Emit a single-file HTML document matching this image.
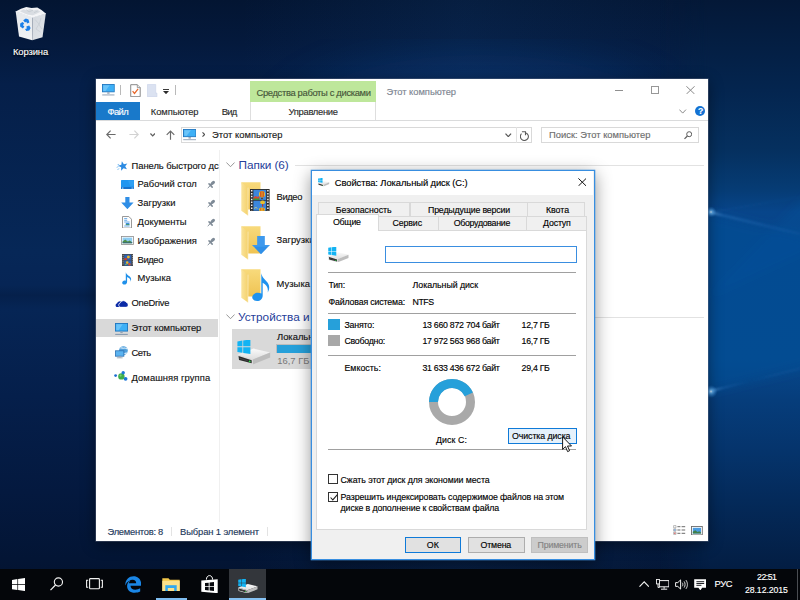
<!DOCTYPE html>
<html lang="ru">
<head>
<meta charset="utf-8">
<title>Свойства: Локальный диск (C:)</title>
<style>
html,body{margin:0;padding:0;}
body{width:800px;height:600px;overflow:hidden;position:relative;background:#081c3c;font-family:"Liberation Sans",sans-serif;font-size:9.4px;color:#000;}
.abs,.t,div,svg{position:absolute;}
.t{-webkit-text-stroke:.14px currentColor;white-space:pre;line-height:14px;height:14px;font-family:"Liberation Sans",sans-serif;}
#wall{left:0;top:0;width:800px;height:600px;}
#taskbar{left:0;top:568.500px;width:800px;height:31.500px;background:#04060a;}
#explorer{left:96px;top:79px;width:612px;height:461.700px;background:#fff;box-shadow:0 0 0 0.6px rgba(120,130,150,.55),0 3px 14px rgba(0,0,0,.45);}
#dialog{left:311.200px;top:170.300px;width:283.500px;height:389.400px;background:#f0f0f0;box-shadow:0 0 0 .3px #4a98e2,0 4px 16px rgba(0,0,0,.42);outline:1.200px solid #388ee0;outline-offset:-1.200px;}
.tb{background:#f0f0f0;border:1px solid #d9d9d9;box-sizing:border-box;}
.sp{left:328px;width:248.400px;height:1px;background:#a0a0a0;}
</style>
</head>
<body>
<!-- ===== WALLPAPER ===== -->
<svg id="wall" width="800" height="600" viewBox="0 0 800 600">
<defs>
<linearGradient id="wv" x1="0" y1="0" x2="0" y2="1">
<stop offset="0" stop-color="#031532"/><stop offset=".07" stop-color="#04193c"/><stop offset=".14" stop-color="#051f49"/><stop offset=".42" stop-color="#062757"/><stop offset=".475" stop-color="#062555"/><stop offset=".492" stop-color="#05204b"/><stop offset=".515" stop-color="#062555"/><stop offset=".66" stop-color="#051f4b"/><stop offset=".82" stop-color="#04193f"/><stop offset=".93" stop-color="#031535"/><stop offset="1" stop-color="#03122c"/>
</linearGradient>
<linearGradient id="wr" x1="0" y1="0" x2="0" y2="1">
<stop offset="0" stop-color="#041837"/><stop offset=".15" stop-color="#04254f"/><stop offset=".25" stop-color="#05305f"/><stop offset=".317" stop-color="#063c75"/><stop offset=".353" stop-color="#07458a"/><stop offset=".42" stop-color="#07478c"/><stop offset=".6" stop-color="#07488c"/><stop offset=".667" stop-color="#063d7b"/><stop offset=".75" stop-color="#05346c"/><stop offset=".833" stop-color="#042a5a"/><stop offset=".942" stop-color="#031e44"/><stop offset="1" stop-color="#031838"/>
</linearGradient>
<linearGradient id="wh" x1="0" y1="0" x2="1" y2="0">
<stop offset="0" stop-color="#fff" stop-opacity="0"/><stop offset=".3" stop-color="#2a7fd8" stop-opacity="0"/><stop offset=".58" stop-color="#2a7fd8" stop-opacity=".09"/><stop offset=".85" stop-color="#2a7fd8" stop-opacity=".03"/><stop offset="1" stop-color="#000" stop-opacity=".12"/>
</linearGradient>
<linearGradient id="mh" x1="0" y1="0" x2="1" y2="0"><stop offset="0" stop-color="#000"/><stop offset=".36" stop-color="#fff"/><stop offset="1" stop-color="#fff"/></linearGradient>
<linearGradient id="ray" x1="0" y1="0" x2="1" y2="0"><stop offset="0" stop-color="#8fccff" stop-opacity=".6"/><stop offset=".15" stop-color="#4fa0ee" stop-opacity=".22"/><stop offset="1" stop-color="#3f8fe0" stop-opacity=".07"/></linearGradient>
<radialGradient id="glow"><stop offset="0" stop-color="#dff2ff" stop-opacity="1"/><stop offset=".25" stop-color="#6fc0ff" stop-opacity=".75"/><stop offset="1" stop-color="#2a86e0" stop-opacity="0"/></radialGradient>
<filter id="b4"><feGaussianBlur stdDeviation="5"/></filter>
<filter id="b1"><feGaussianBlur stdDeviation=".9"/></filter>
<filter id="b20"><feGaussianBlur stdDeviation="22"/></filter>
</defs>
<rect width="800" height="600" fill="url(#wv)"/>
<rect width="800" height="600" fill="url(#wh)"/>
<ellipse cx="480" cy="135" rx="200" ry="80" fill="#0d4a96" opacity=".26" filter="url(#b20)"/>
<mask id="mr"><rect x="660" y="0" width="140" height="600" fill="url(#mh)"/></mask><rect x="660" y="0" width="140" height="600" fill="url(#wr)" mask="url(#mr)"/>
<g filter="url(#b4)"><path d="M704 212L812 238V366L704 393z" fill="#0a4f98" opacity=".5"/><path d="M704 300L812 250V190z" fill="#0a58a8" opacity=".18"/></g>
<path d="M710 300.500H800" stroke="#04356e" stroke-width="1.800" opacity=".9" filter="url(#b1)"/>
<g filter="url(#b1)"><path d="M710 211L800 232.500v3L710 213.500z" fill="url(#ray)"/><path d="M710 392.500L800 367v3L710 390z" fill="url(#ray)"/><path d="M710 212L800 196v2L710 213z" fill="url(#ray)" opacity=".35"/></g>
<path d="M710.200 212V392" stroke="#9fd4ff" stroke-width="1.400" opacity=".8" filter="url(#b1)"/>
<circle cx="711" cy="212" r="5.500" fill="url(#glow)"/><circle cx="711" cy="391.500" r="6.500" fill="url(#glow)"/>
</svg>

<svg width="0" height="0" style="left:0;top:0"><defs>
<linearGradient id="fb" x1="0" y1="0" x2="0" y2="1"><stop offset="0" stop-color="#f8da7c"/><stop offset="1" stop-color="#efc352"/></linearGradient>
<linearGradient id="ff" x1="0" y1="0" x2="1" y2="0"><stop offset="0" stop-color="#fae39a"/><stop offset="1" stop-color="#f4d16c"/></linearGradient>
<symbol id="folder" viewBox="0 0 20 34"><path d="M.3.200h19.200v27.400H6.800z" fill="url(#fb)"/><path d="M.3.200l6.700 5.300v28L.3 28.800z" fill="url(#ff)"/><path d="M7 5.500v28" stroke="#fbeec4" stroke-width=".7"/></symbol>
<linearGradient id="dg" x1="0" y1="0" x2="0" y2="1"><stop offset="0" stop-color="#fafafa"/><stop offset="1" stop-color="#dedede"/></linearGradient>
<symbol id="drive" viewBox="0 0 34 25"><path d="M.4 14.600L16.700 8.600l16.500 4L15.800 19.400z" fill="url(#dg)"/><path d="M15.800 19.400L33.200 12.600v5L15.800 24.500z" fill="#bdbdbd"/><path d="M.4 14.600l15.400 4.800v5.100L1 20.700z" fill="#dcdcdc"/><path d="M1.500 16.100l13.200 4.100v3L2 19.900z" fill="#2b2b2b"/><path d="M2.400 17.800l8.600 2.600v.9l-8.500-2.500z" fill="#4a4a4a"/><circle cx="12.700" cy="21.400" r=".95" fill="#2fe04a"/><path d="M.4 1.400l5-.8v5.700h-5zM6.200.5L13.400-.6v6.900H6.200zM.4 7.300h5v5.500l-5-.8zM6.200 7.300h7.200v6.800l-7.200-1.200z" fill="#12b3f3"/></symbol>
<symbol id="pc" viewBox="0 0 13 12"><rect x=".45" y=".45" width="12.100" height="7.500" fill="#3eb0f6" stroke="#1f76bf" stroke-width=".9"/><path d="M1.300 1.300h6.400L3.600 7.100H1.300z" fill="#8fd6fb" opacity=".55"/><rect x="5.300" y="8.400" width="2.400" height="1.500" fill="#94a3b4"/><rect x=".2" y="10.700" width="12.600" height="1" fill="#8094ab"/></symbol>
</defs></svg>
<!-- ===== EXPLORER WINDOW ===== -->
<div id="explorer">
</div>
<div id="ex" style="left:0;top:0;width:0;height:0;">
<!-- quick access toolbar -->
<svg style="left:102.2px;top:84.2px" width="12.8" height="11.8" viewBox="0 0 13 12" preserveAspectRatio="none"><use href="#pc"/></svg>
<div style="left:120px;top:85px;width:1px;height:9.6px;background:#b9b9b9"></div>
<svg style="left:129.6px;top:83.8px" width="11" height="13.4" viewBox="0 0 11 13.4"><path d="M.7.7h6.6l2.9 2.9v9.1H.7z" fill="#fff" stroke="#7c7c7c" stroke-width=".9"/><path d="M7.3.7v2.9h2.9" fill="#e8e8e8" stroke="#7c7c7c" stroke-width=".7"/><path d="M2.6 7.2l1.9 2.2 3.6-4.6" fill="none" stroke="#e8672a" stroke-width="1.25"/></svg>
<svg style="left:146.8px;top:83.8px" width="11" height="13.4" viewBox="0 0 11 13.4"><path d="M.5.500h8.200v8.600h1.200v3.800H.5z" fill="#dbe2f1" stroke="#cdd6ea" stroke-width=".7"/></svg>
<div style="left:163px;top:88.6px;width:6px;height:1.1px;background:#3b3b3b"></div>
<svg style="left:163px;top:90.8px" width="6" height="3.2" viewBox="0 0 6 3.2"><path d="M0 0h6L3 3.2z" fill="#2b2b2b"/></svg>
<div style="left:175.4px;top:85px;width:1px;height:9.6px;background:#b9b9b9"></div>
<!-- contextual tab -->
<div style="left:250.400px;top:81.200px;width:125.200px;height:21px;background:#bee79b"></div>
<span class="t" style="left:256.5px;top:85.5px;font-size:9.4px;letter-spacing:-0.335px;color:#46563a;">Средства работы с дисками</span>
<span class="t" style="left:386.5px;top:84.8px;font-size:9.4px;letter-spacing:-0.044px;color:#7d8591;">Этот компьютер</span>
<div style="left:250.400px;top:102.200px;width:1px;height:17.600px;background:#dedede"></div>
<div style="left:374.800px;top:102.200px;width:1px;height:17.600px;background:#dedede"></div>
<!-- caption buttons -->
<div style="left:615.2px;top:90px;width:8.2px;height:1px;background:#8f8f8f"></div>
<div style="left:650.8px;top:86.2px;width:7.8px;height:7.4px;border:1px solid #989898;box-sizing:border-box"></div>
<svg style="left:686.4px;top:86px" width="9" height="8.4" viewBox="0 0 9 8.4"><path d="M.3.2l8.4 8M8.7.2L.3 8.2" stroke="#8a8a8a" stroke-width="1" fill="none"/></svg>
<!-- ribbon tabs -->
<div style="left:96px;top:102.2px;width:44px;height:18px;background:#1979ca"></div>
<span class="t" style="left:107.6px;top:105px;font-size:9.4px;letter-spacing:-0.666px;color:#fff;">Файл</span>
<span class="t" style="left:150.8px;top:105px;font-size:9.4px;letter-spacing:-0.092px;color:#2b2b2b;">Компьютер</span>
<span class="t" style="left:221.8px;top:105px;font-size:9.4px;letter-spacing:-0.756px;color:#2b2b2b;">Вид</span>
<span class="t" style="left:288.6px;top:105px;font-size:9.4px;letter-spacing:-0.312px;color:#2b2b2b;">Управление</span>
<svg style="left:679.4px;top:108.6px" width="7.4" height="5" viewBox="0 0 7.4 5"><path d="M.4.6l3.3 3.5L7 .6" fill="none" stroke="#8a8a8a" stroke-width="1"/></svg>
<div style="left:694.600px;top:105.600px;width:10.800px;height:10.800px;border-radius:50%;background:#1372d3"></div>
<span class="t" style="left:698px;top:104.2px;font-size:8.6px;color:#fff;font-weight:bold;">?</span>
<div style="left:96px;top:119.500px;width:612px;height:1px;background:#dadbdc"></div>
<!-- nav row -->
<svg style="left:106.2px;top:130px" width="10" height="9" viewBox="0 0 10 9"><path d="M9.6 4.5H1M4.6.7L.8 4.5l3.8 3.8" fill="none" stroke="#6a6a6a" stroke-width="1.15"/></svg>
<svg style="left:129.4px;top:130px" width="10" height="9" viewBox="0 0 10 9"><path d="M.4 4.5H9M5.4.7l3.8 3.8-3.8 3.8" fill="none" stroke="#d2d2d2" stroke-width="1.15"/></svg>
<svg style="left:150px;top:133px" width="5.4" height="3.6" viewBox="0 0 5.4 3.6"><path d="M.4.500l2.300 2.400L5 .5" fill="none" stroke="#5f5f5f" stroke-width="1.250"/></svg>
<svg style="left:166.4px;top:129.6px" width="9" height="10" viewBox="0 0 9 10"><path d="M4.5 9.8V1M.7 4.8L4.5 1l3.8 3.8" fill="none" stroke="#6a6a6a" stroke-width="1.15"/></svg>
<div style="left:180.6px;top:126.8px;width:351.2px;height:16.6px;border:1px solid #d9d9d9;box-sizing:border-box"></div>
<div style="left:516.4px;top:127.4px;width:1px;height:15.4px;background:#e2e2e2"></div>
<svg style="left:183px;top:129.2px" width="13.4" height="11.6" viewBox="0 0 13 12" preserveAspectRatio="none"><use href="#pc"/></svg>
<svg style="left:201.6px;top:132.4px" width="3.4" height="5" viewBox="0 0 3.4 5"><path d="M.5.400l2.200 2.100L.5 4.600" fill="none" stroke="#4f4f4f" stroke-width="1.150"/></svg>
<span class="t" style="left:212px;top:127.8px;font-size:9.4px;letter-spacing:0.028px;color:#1a1a1a;">Этот компьютер</span>
<svg style="left:505.4px;top:132.6px" width="6.6" height="4.6" viewBox="0 0 6.6 4.6"><path d="M.5.6l2.8 3 2.8-3" fill="none" stroke="#555" stroke-width="1.2"/></svg>
<svg style="left:519.800px;top:130.800px" width="9.400" height="10.200" viewBox="0 0 9.400 10.200"><path d="M6.200 1.900A4 4 0 1 1 1.500 2.700" fill="none" stroke="#5a5a5a" stroke-width="1.100"/><path d="M1.900.75h3.600v3.400" fill="none" stroke="#5a5a5a" stroke-width="1.100"/></svg>
<div style="left:541.4px;top:126.8px;width:157.8px;height:16.6px;border:1px solid #d9d9d9;box-sizing:border-box"></div>
<span class="t" style="left:549px;top:128px;font-size:9.4px;letter-spacing:0.010px;color:#6d6d6d;">Поиск: Этот компьютер</span>
<svg style="left:683.8px;top:131.2px" width="8.4" height="8.4" viewBox="0 0 8.4 8.4"><circle cx="5.2" cy="3.2" r="2.5" fill="none" stroke="#5d5d5d" stroke-width="1"/><path d="M3.4 5L.5 7.9" stroke="#5d5d5d" stroke-width="1.2"/></svg>
<!-- sidebar -->
<div style="left:219px;top:150px;width:1px;height:372px;background:#f0f0f0"></div>
<svg style="left:116.4px;top:160.6px" width="12" height="10" viewBox="0 0 12 10"><g transform="rotate(-14 7 5)"><path d="M7 .200l1.300 3.200 3.500.2-2.700 2.200.9 3.400L7 7.300 4 9.200l.9-3.400L2.200 3.600l3.500-.2z" fill="#2c8be2"/></g><path d="M.6 6.400l2-.9M1.400 8.600l1.900-1M1.600 3.600l1.500-.2" stroke="#74baf3" stroke-width=".8"/></svg>
<span class="t" style="left:131.5px;top:158.6px;font-size:9.4px;letter-spacing:-0.030px;color:#111;">Панель быстрого д</span>
<div style="left:214px;top:159px;width:4.6px;height:13px;overflow:hidden"><span class="t" style="left:0;top:-.4px;font-size:9.4px;color:#111">с</span></div>
<svg style="left:121px;top:179.8px" width="13.2" height="9.4" viewBox="0 0 13.2 9.4"><rect width="13.200" height="9.200" rx=".6" fill="#2196f0"/><path d="M7 .5h5.700v5L9.500 6.400z" fill="#3aa6f5" opacity=".6"/><rect y="7" width="13.200" height="2.200" fill="#1672cc"/><rect x=".9" y="7.600" width="1.500" height="1" fill="#cfe9ff"/><rect x="10.500" y="7.600" width="1.900" height="1" fill="#9fd2fb"/></svg>
<span class="t" style="left:137.6px;top:177.4px;font-size:9.4px;letter-spacing:0.028px;color:#111;">Рабочий стол</span>
<svg style="left:207.400px;top:180px" width="9" height="9" viewBox="0 0 9 9"><g stroke="#7f8b97" fill="none" stroke-linecap="round"><path d="M6.500 2.300L5.600 3.100" stroke-width="3"/><path d="M5.900 2.900L3.700 4.900" stroke-width="2.100"/><path d="M2 3.900l3.200 3.200" stroke-width="1.500"/><path d="M3.100 5.700L1 7.800" stroke-width="1"/></g></svg>
<svg style="left:121.2px;top:196.8px" width="12.8" height="12.4" viewBox="0 0 12.8 12.4"><path d="M4.3 0h4.2v5.6h4.1L6.4 12.2.2 5.6h4.1z" fill="#2f8ee6"/></svg>
<span class="t" style="left:137.6px;top:196.2px;font-size:9.4px;letter-spacing:0.021px;color:#111;">Загрузки</span>
<svg style="left:207.400px;top:198.8px" width="9" height="9" viewBox="0 0 9 9"><g stroke="#7f8b97" fill="none" stroke-linecap="round"><path d="M6.500 2.300L5.600 3.100" stroke-width="3"/><path d="M5.900 2.900L3.700 4.900" stroke-width="2.100"/><path d="M2 3.900l3.200 3.200" stroke-width="1.500"/><path d="M3.100 5.700L1 7.800" stroke-width="1"/></g></svg>
<svg style="left:122.2px;top:215.6px" width="10" height="12.6" viewBox="0 0 10 12.6"><path d="M.5.5h6.3l2.7 2.7v8.9H.5z" fill="#fdfdfd" stroke="#8c8c8c" stroke-width=".9"/><path d="M2.200 2.600h3M2.200 4.300h3M2.200 6h5.400M2.200 10h5.400" stroke="#5aa3e6" stroke-width=".9"/><rect x="3.800" y="6.900" width="3.600" height="2.200" fill="#3e8fe0"/><rect x="3.800" y="8.300" width="3.600" height=".8" fill="#4a9a4a"/></svg>
<span class="t" style="left:137.6px;top:215.2px;font-size:9.4px;letter-spacing:0.086px;color:#111;">Документы</span>
<svg style="left:207.400px;top:217.8px" width="9" height="9" viewBox="0 0 9 9"><g stroke="#7f8b97" fill="none" stroke-linecap="round"><path d="M6.500 2.300L5.600 3.100" stroke-width="3"/><path d="M5.900 2.900L3.700 4.900" stroke-width="2.100"/><path d="M2 3.900l3.200 3.200" stroke-width="1.500"/><path d="M3.100 5.700L1 7.800" stroke-width="1"/></g></svg>
<svg style="left:121.2px;top:236.4px" width="12.8" height="8.8" viewBox="0 0 12.8 8.8"><rect x=".4" y=".4" width="12" height="8" fill="#fff" stroke="#8d8d8d" stroke-width=".8"/><rect x="1.6" y="1.6" width="9.6" height="5.6" fill="#8ecdf3"/><path d="M1.6 7.2V5.4l2.6-1.8 2.6 2 1.8-1 2.6 1.6v1z" fill="#4f8f4a"/><path d="M1.6 7.2V6.4l9.6 0v.8z" fill="#2f5f8a"/></svg>
<span class="t" style="left:137.6px;top:233.8px;font-size:9.4px;letter-spacing:0.025px;color:#111;">Изображения</span>
<svg style="left:207.400px;top:236.6px" width="9" height="9" viewBox="0 0 9 9"><g stroke="#7f8b97" fill="none" stroke-linecap="round"><path d="M6.500 2.300L5.600 3.100" stroke-width="3"/><path d="M5.900 2.900L3.700 4.900" stroke-width="2.100"/><path d="M2 3.900l3.200 3.200" stroke-width="1.500"/><path d="M3.100 5.700L1 7.800" stroke-width="1"/></g></svg>
<svg style="left:121.800px;top:253.800px" width="11.600" height="12.200" viewBox="0 0 11.600 12.200"><rect width="11.600" height="12.200" fill="#4a4a4a"/><rect x="2.300" y=".7" width="7" height="5.200" fill="#2c63b8"/><rect x="2.300" y="6.500" width="7" height="5.100" fill="#2c63b8"/><circle cx="6.400" cy="3" r="1.500" fill="#e8b62c"/><path d="M2.300 5.900V4.600l1.600-.9 1.300.9v1.300z" fill="#c8402a"/><circle cx="5.200" cy="8.600" r="1.300" fill="#e8b62c"/><circle cx="7.400" cy="10.200" r="1.200" fill="#d8502a"/><path d="M3 10.800l1.200-.6 1 .6" stroke="#7fd04a" stroke-width=".7" fill="none"/><path d="M1.100 1v10.400M10.500 1v10.400" stroke="#9a9a9a" stroke-width="1" stroke-dasharray="1 1.100"/></svg>
<span class="t" style="left:137.6px;top:252.8px;font-size:9.4px;letter-spacing:-0.398px;color:#111;">Видео</span>
<svg style="left:122.2px;top:272.4px" width="9.6" height="12.8" viewBox="0 0 9.6 12.8"><path d="M3.8.2c.6 2.2 2.4 3 4 4.4 1.600 1.5 1.800 3.400.6 5.200.5-2-.4-3.500-3.300-4.700v4.600c0 1.700-1.200 2.900-2.700 2.900C1 12.600.2 11.800.2 10.800c0-1.300 1.100-2.300 2.400-2.300.4 0 .8.100 1.200.3z" fill="#1f90ea"/></svg>
<span class="t" style="left:137.6px;top:271.2px;font-size:9.4px;letter-spacing:0.038px;color:#111;">Музыка</span>
<svg style="left:114.600px;top:298.800px" width="13.400" height="8.600" viewBox="0 0 13.400 8.600"><path d="M2.500 8.300A2.100 2.100 0 0 1 2.100 4.200 2.700 2.700 0 0 1 6.600 3.200V8.300z" fill="#0b2aa6"/><path d="M5.700 8.300A2.250 2.250 0 0 1 5.300 3.900 3.400 3.400 0 0 1 11.500 3.500 2.450 2.450 0 0 1 11 8.300z" fill="#0b2aa6" stroke="#fff" stroke-width=".75"/></svg>
<span class="t" style="left:131.5px;top:296.2px;font-size:9.4px;letter-spacing:-0.226px;color:#111;">OneDrive</span>
<div style="left:96px;top:318.800px;width:121.800px;height:18.4px;background:#d9d9d9"></div>
<svg style="left:114.7px;top:322.6px" width="13" height="12.2" viewBox="0 0 13 12" preserveAspectRatio="none"><use href="#pc"/></svg>
<span class="t" style="left:131.5px;top:321.4px;font-size:9.4px;letter-spacing:-0.022px;color:#111;">Этот компьютер</span>
<svg style="left:114.6px;top:346.4px" width="13.2" height="12.8" viewBox="0 0 13.2 12.8"><circle cx="8.400" cy="4.600" r="4.400" fill="#4f9fdc"/><path d="M5.400 2.200c1.600-.9 2.600.5 3.800-.1 1-.5 1.900.3 3 .8M8 7.400c1.400.4 2.800-.6 4.200-.2" stroke="#d4e9f8" stroke-width="1.200" fill="none"/><rect x=".5" y="4.800" width="8.400" height="5.400" fill="#5bb3f0" stroke="#2a6fb0" stroke-width=".8"/><rect x="3.400" y="10.400" width="2.600" height="1" fill="#98a4b0"/><rect x="1.800" y="11.400" width="5.800" height=".9" fill="#98a4b0"/></svg>
<span class="t" style="left:131.5px;top:346.2px;font-size:9.4px;letter-spacing:-0.415px;color:#111;">Сеть</span>
<svg style="left:114.4px;top:371.4px" width="13.600" height="10.200" viewBox="0 0 13.600 10.200"><circle cx="1.600" cy="4.600" r="1.400" fill="#1e6fd0"/><circle cx="7.400" cy="5.400" r="3.200" fill="#3fae49"/><circle cx="9.200" cy="1.800" r="1.700" fill="#1e78d8"/><circle cx="11.600" cy="7.800" r="1.900" fill="#1e78d8"/><circle cx="6.600" cy="4.600" r="1.100" fill="#8fe08a" opacity=".7"/></svg>
<span class="t" style="left:131.5px;top:371.2px;font-size:9.4px;letter-spacing:0.088px;color:#111;">Домашняя группа</span>

<!-- content -->
<svg style="left:225.6px;top:162px" width="9" height="5.400" viewBox="0 0 9 5.400"><path d="M.4.500l4.100 4.200L8.600.5" fill="none" stroke="#8c8c8c" stroke-width=".9"/></svg>
<span class="t" style="left:238.5px;top:158px;font-size:11.8px;letter-spacing:-0.075px;color:#26409a;-webkit-text-stroke:0;">Папки (6)</span>
<div style="left:294.6px;top:164.800px;width:409px;height:1px;background:#e2e2e2"></div>
<svg style="left:241.200px;top:181.800px" width="20" height="34"><use href="#folder"/></svg>
<svg style="left:250.400px;top:188.600px" width="19.600" height="22.600" viewBox="0 0 19.600 22.600"><rect width="19.600" height="22.600" fill="#2d2d2d"/><rect x="3.400" y=".9" width="12.800" height="10" fill="#3b86dc"/><rect x="3.400" y="11.700" width="12.800" height="10" fill="#3b86dc"/><path d="M3.400 8.500l2.200-1.600 2 1.200 1.800-1.400v4.200H3.400z" fill="#d8492f"/><path d="M3.400 9.600h6v1.300h-6z" fill="#2f9a3a"/><ellipse cx="12" cy="5.200" rx="3" ry="3.300" fill="#e9c02c"/><path d="M10.600 2.500v5.400M12 1.900v6.600M13.400 2.500v5.400" stroke="#c8321e" stroke-width=".8"/><rect x="11.200" y="8.800" width="1.600" height="1.300" fill="#5a3a1a"/><ellipse cx="12.600" cy="13.400" rx="2.400" ry="1.800" fill="#e9c02c"/><path d="M12.600 15.200v2.400" stroke="#c8321e" stroke-width="1.200"/><ellipse cx="12" cy="20.600" rx="3" ry="2" fill="#e9c02c"/><path d="M10.800 19.200v2.500M13.200 19.200v2.500" stroke="#c8321e" stroke-width=".8"/><path d="M4 19.400l2-.9 1.400.9" stroke="#e8e070" stroke-width=".7" fill="none"/><path d="M1.700 1v20.600M17.900 1v20.600" stroke="#f2f2f2" stroke-width="1.500" stroke-dasharray="1.500 1.400"/></svg>
<svg style="left:241.200px;top:225.700px" width="20" height="34"><use href="#folder"/></svg>
<svg style="left:252.400px;top:236px" width="18" height="18.400" viewBox="0 0 18 18.400"><path d="M5.300 0h7.400v9h5.200L9 18.300.1 9h5.200z" fill="#2f8fe8"/><path d="M5.300 0h7.400v9h5.200l-1.700 1.800H1.800L.1 9h5.200z" fill="#4ba3f0" opacity=".55"/></svg>
<svg style="left:241.200px;top:269.200px" width="20" height="34"><use href="#folder"/></svg>
<svg style="left:252.400px;top:273px" width="17.400" height="28.200" viewBox="0 0 17.400 28.200"><path d="M9.300.2c.9 4.600 4 6.200 6.200 9.200 2.300 3.200 2.200 6.900.2 10 .8-4.300-.9-7.400-5-9.600v12.600c0 3.300-2.500 5.600-5.600 5.600-2.800 0-4.900-1.600-4.900-3.700 0-2.600 2.700-4.600 5.700-4.600 1.200 0 2.400.3 3.400.8z" fill="#1f92ee"/></svg>

<span class="t" style="left:276.6px;top:189.8px;font-size:9.4px;letter-spacing:-0.398px;color:#111;">Видео</span>
<span class="t" style="left:276.6px;top:233.2px;font-size:9.4px;letter-spacing:0.021px;color:#111;">Загрузки</span>
<span class="t" style="left:276.6px;top:277px;font-size:9.4px;letter-spacing:0.038px;color:#111;">Музыка</span>
<svg style="left:225.600px;top:314.400px" width="9" height="5.400" viewBox="0 0 9 5.400"><path d="M.4.500l4.100 4.200L8.600.5" fill="none" stroke="#8c8c8c" stroke-width=".9"/></svg>
<span class="t" style="left:238px;top:310.2px;font-size:11.8px;color:#26409a;-webkit-text-stroke:0;">Устройства и диски (1)</span>
<div style="left:372px;top:317px;width:331.600px;height:1px;background:#e2e2e2"></div>
<div style="left:232.200px;top:329px;width:140px;height:40.400px;background:#d9d9d9"></div>
<svg style="left:236.800px;top:340.400px" width="34" height="25"><use href="#drive"/></svg>

<span class="t" style="left:277px;top:329.8px;font-size:9.4px;color:#111;">Локальный диск (C:)</span>
<div style="left:276.400px;top:344.400px;width:92px;height:8.600px;background:#e6e6e6;border:.6px solid #bcbcbc;box-sizing:border-box"></div>
<div style="left:276.800px;top:344.800px;width:40px;height:7.800px;background:#26a0da"></div>
<span class="t" style="left:277.3px;top:353.8px;font-size:9.4px;color:#787878;-webkit-text-stroke:0;">16,7 ГБ свободно из 29,4 ГБ</span>

<!-- status bar -->
<span class="t" style="left:107.5px;top:524.6px;font-size:9.4px;letter-spacing:-0.272px;color:#1e395b;">Элементов: 8</span>
<div style="left:171px;top:527.400px;width:1px;height:8.800px;background:#e3e3e3"></div>
<span class="t" style="left:180px;top:524.6px;font-size:9.4px;letter-spacing:-0.111px;color:#1e395b;">Выбран 1 элемент</span>
<div style="left:267px;top:527.400px;width:1px;height:8.800px;background:#e3e3e3"></div>
<svg style="left:673.400px;top:525.400px" width="13" height="10" viewBox="0 0 13 10"><path d="M.6.600h2.400v2.200H.6zM.6 3.900h2.400v2.200H.6zM.6 7.200h2.400v2.200H.6z" fill="#fff" stroke="#8f8f8f" stroke-width=".6"/><rect x="1.100" y="4.400" width="1.400" height="1.200" fill="#4a90e2"/><rect x="1.100" y="7.700" width="1.400" height="1.200" fill="#e06060"/><path d="M4.400 1.700h3M8.600 1.700h3.600M4.400 5h3M8.600 5h3.600M4.400 8.300h3M8.600 8.300h3.600" stroke="#6a6a6a" stroke-width="1"/></svg>
<svg style="left:690.800px;top:526px" width="11.800" height="9.400" viewBox="0 0 11.800 9.400"><rect x=".5" y=".5" width="10.800" height="8.400" fill="#fff" stroke="#6c6c6c" stroke-width=".9"/><rect x="1.800" y="1.800" width="8.200" height="5.800" fill="#4a9be0"/><path d="M1.800 7.600V5.800l2.400-1.600 2.400 1.800 1.600-.8 1.800 1.200v1.200z" fill="#3f7f4a"/></svg>

</div>

<!-- ===== PROPERTIES DIALOG ===== -->
<div id="dialog">
</div>
<div id="dl" style="left:0;top:0;width:0;height:0;">
<div style="left:312px;top:171.400px;width:281.400px;height:23.800px;background:#fff"></div>
<svg style="left:318.400px;top:178.400px" width="11.600" height="8.600" viewBox="0 0 34 25" preserveAspectRatio="none"><use href="#drive"/></svg>
<span class="t" style="left:334.8px;top:176px;font-size:9.4px;letter-spacing:-0.080px;color:#000;">Свойства: Локальный диск (C:)</span>
<svg style="left:577.700px;top:177.800px" width="8.600" height="8.400" viewBox="0 0 8.600 8.400"><path d="M.4.400l7.800 7.600M8.200.4L.4 8" stroke="#111" stroke-width="1" fill="none"/></svg>
<!-- tabs row 1 -->
<div class="tb" style="left:318.200px;top:202px;width:92px;height:14.600px"></div>
<div class="tb" style="left:409.600px;top:202px;width:118px;height:14.600px"></div>
<div class="tb" style="left:526.800px;top:202px;width:58.600px;height:14.600px"></div>
<span class="t" style="left:335.8px;top:202.8px;font-size:8.8px;letter-spacing:-0.027px;color:#000;">Безопасность</span>
<span class="t" style="left:428px;top:202.8px;font-size:8.8px;letter-spacing:-0.176px;color:#000;">Предыдущие версии</span>
<span class="t" style="left:546px;top:202.8px;font-size:8.8px;letter-spacing:-0.047px;color:#000;">Квота</span>
<!-- tabs row 2 -->
<div class="tb" style="left:377.600px;top:216.200px;width:61px;height:14.600px"></div>
<div class="tb" style="left:437.800px;top:216.200px;width:89px;height:14.600px"></div>
<div class="tb" style="left:526px;top:216.200px;width:61.400px;height:14.600px"></div>
<span class="t" style="left:392.6px;top:216.4px;font-size:8.8px;letter-spacing:-0.138px;color:#000;">Сервис</span>
<span class="t" style="left:453.7px;top:216.4px;font-size:8.8px;letter-spacing:-0.295px;color:#000;">Оборудование</span>
<span class="t" style="left:543px;top:216.4px;font-size:8.8px;letter-spacing:-0.157px;color:#000;">Доступ</span>
<!-- pane -->
<div style="left:316px;top:230.200px;width:271.400px;height:299.800px;background:#fff;border:1px solid #d9d9d9;box-sizing:border-box"></div>
<div style="left:316px;top:214.400px;width:62.600px;height:17px;background:#fff;border:1px solid #d9d9d9;border-bottom:none;box-sizing:border-box"></div>
<span class="t" style="left:332.9px;top:215px;font-size:8.8px;letter-spacing:-0.207px;color:#000;">Общие</span>
<svg style="left:328px;top:246.600px" width="21" height="15.600" viewBox="0 0 34 25" preserveAspectRatio="none"><use href="#drive"/></svg>
<div style="left:385.400px;top:245.800px;width:192px;height:17.400px;background:#fff;border:1px solid #3a8ee0;box-sizing:border-box"></div>
<div class="sp" style="top:271.800px"></div>
<span class="t" style="left:328.4px;top:278px;font-size:8.8px;letter-spacing:-0.127px;color:#000;">Тип:</span>
<span class="t" style="left:412.6px;top:278px;font-size:8.8px;letter-spacing:-0.054px;color:#000;">Локальный диск</span>
<span class="t" style="left:328.4px;top:294.8px;font-size:8.8px;letter-spacing:-0.154px;color:#000;">Файловая система:</span>
<span class="t" style="left:412.6px;top:294.8px;font-size:8.8px;letter-spacing:-0.492px;color:#000;">NTFS</span>
<div class="sp" style="top:312.600px"></div>
<div style="left:328.400px;top:319px;width:11.200px;height:10.600px;background:#26a0da"></div>
<span class="t" style="left:344.4px;top:317.6px;font-size:8.8px;letter-spacing:-0.158px;color:#000;">Занято:</span>
<span class="t" style="left:422.4px;top:317.6px;font-size:8.8px;letter-spacing:-0.267px;color:#000;">13 660 872 704 байт</span>
<span class="t" style="left:521.6px;top:317.6px;font-size:8.8px;letter-spacing:-0.301px;color:#000;">12,7 ГБ</span>
<div style="left:328.400px;top:335.400px;width:11.200px;height:10.800px;background:#a8a8a8"></div>
<span class="t" style="left:344.4px;top:333.6px;font-size:8.8px;letter-spacing:-0.255px;color:#000;">Свободно:</span>
<span class="t" style="left:422.4px;top:333.6px;font-size:8.8px;letter-spacing:-0.267px;color:#000;">17 972 563 968 байт</span>
<span class="t" style="left:521.6px;top:333.6px;font-size:8.8px;letter-spacing:-0.301px;color:#000;">16,7 ГБ</span>
<div class="sp" style="top:355px"></div>
<span class="t" style="left:344.4px;top:360.6px;font-size:8.8px;letter-spacing:0.048px;color:#000;">Емкость:</span>
<span class="t" style="left:422.4px;top:360.6px;font-size:8.8px;letter-spacing:-0.267px;color:#000;">31 633 436 672 байт</span>
<span class="t" style="left:521.6px;top:360.6px;font-size:8.8px;letter-spacing:-0.301px;color:#000;">29,4 ГБ</span>
<svg style="left:428px;top:377.500px" width="48" height="48" viewBox="-24 -24 48 48"><circle r="18.500" fill="none" stroke="#a9a9a9" stroke-width="9"/><path d="M-18.500 0A18.500 18.500 0 0 1 16.830-7.680" fill="none" stroke="#26a0da" stroke-width="9"/></svg>
<span class="t" style="left:436px;top:433.2px;font-size:8.8px;letter-spacing:0.089px;color:#000;">Диск C:</span>
<div style="left:508px;top:427.800px;width:69px;height:16.200px;background:#e5f1fb;border:1px solid #0f7ad8;box-sizing:border-box"></div>
<span class="t" style="left:512px;top:429px;font-size:8.8px;letter-spacing:-0.087px;color:#000;">Очистка диска</span>
<div class="sp" style="top:448.600px"></div>
<div style="left:328.400px;top:474.200px;width:9.800px;height:10px;background:#fff;border:1px solid #333;box-sizing:border-box"></div>
<span class="t" style="left:340.4px;top:472.8px;font-size:8.8px;letter-spacing:-0.064px;color:#000;">Сжать этот диск для экономии места</span>
<div style="left:328.400px;top:492.200px;width:9.800px;height:10px;background:#fff;border:1px solid #333;box-sizing:border-box"></div>
<svg style="left:329.600px;top:493.800px" width="8" height="7" viewBox="0 0 8 7"><path d="M.6 3.500l2.200 2.400L7.400.7" fill="none" stroke="#222" stroke-width="1.050"/></svg>
<span class="t" style="left:340.6px;top:490.2px;font-size:8.8px;letter-spacing:-0.119px;color:#000;">Разрешить индексировать содержимое файлов на этом</span>
<span class="t" style="left:340.6px;top:500.8px;font-size:8.8px;letter-spacing:-0.124px;color:#000;">диске в дополнение к свойствам файла</span>
<!-- buttons -->
<div style="left:404.600px;top:536.800px;width:56.600px;height:16px;background:#e1e1e1;border:1.600px solid #0f7ad8;box-sizing:border-box"></div>
<span class="t" style="left:426.8px;top:538px;font-size:8.8px;color:#000;">ОК</span>
<div style="left:468px;top:536.800px;width:57px;height:16px;background:#e1e1e1;border:1px solid #adadad;box-sizing:border-box"></div>
<span class="t" style="left:480.6px;top:538px;font-size:8.8px;letter-spacing:-0.194px;color:#000;">Отмена</span>
<div style="left:531px;top:536.800px;width:57px;height:16px;background:#cccccc;border:1px solid #bfbfbf;box-sizing:border-box"></div>
<span class="t" style="left:537.6px;top:538px;font-size:8.8px;letter-spacing:-0.163px;color:#838383;">Применить</span>
<!-- cursor -->
<svg style="left:561.800px;top:436.400px" width="11" height="17" viewBox="0 0 11 17"><path d="M.6.800v12.600l2.900-2.700 2.100 4.900 2-.9-2.100-4.700h4z" fill="#fff" stroke="#000" stroke-width=".9" stroke-linejoin="round"/></svg>
</div>

<!-- ===== TASKBAR ===== -->
<div id="taskbar">
</div>
<div id="tk" style="left:0;top:0;width:0;height:0;">
<!-- start -->
<svg style="left:12px;top:577.800px" width="13.400" height="13.200" viewBox="0 0 13.400 13.200"><path d="M0 1.900l5.400-.8v5.100H0zM6.100 1L13.300 0v6.200H6.100zM0 6.900h5.400V12L0 11.200zM6.100 6.900h7.200v6.200l-7.200-1z" fill="#fff"/></svg>
<!-- search -->
<svg style="left:49.800px;top:577.400px" width="13.600" height="13.600" viewBox="0 0 13.600 13.600"><circle cx="8.400" cy="5" r="4.100" fill="none" stroke="#f2f2f2" stroke-width="1.100"/><path d="M5.500 8L.5 13.100" stroke="#f2f2f2" stroke-width="1.200"/></svg>
<!-- task view -->
<svg style="left:85.600px;top:578.400px" width="17" height="11.400" viewBox="0 0 17 11.400"><rect x="3.600" y=".6" width="9.800" height="10.200" rx=".8" fill="none" stroke="#f2f2f2" stroke-width="1.100"/><path d="M2.200 2.200H.6v7h1.600M14.800 2.200h1.600v7h-1.600" fill="none" stroke="#f2f2f2" stroke-width="1.100"/></svg>
<!-- edge -->
<svg style="left:124.800px;top:576px" width="16.400" height="17" viewBox="0 0 16.400 17"><path d="M.3 8.400C.6 3.600 4 .3 8.600.3c4.600 0 7.600 3.300 7.600 7.800v1.700H5.500c.1 2.500 2.100 3.900 4.800 3.900 1.900 0 3.500-.5 4.900-1.400v3.300c-1.500.8-3.300 1.200-5.400 1.200-4.700 0-7.700-2.700-7.700-6.800 0-2.500 1.300-4.500 3.400-5.800-1 1-1.500 2-1.600 3.100h7.300c0-2.100-1.300-3.500-3.500-3.500-3 0-5.700 1.800-7.400 5.600z" fill="#1a86e6"/></svg>
<!-- explorer -->
<svg style="left:161.800px;top:576.800px" width="18" height="14.600" viewBox="0 0 18 14.600"><path d="M.3 1.200h6.200l1.300 1.500h9.900v11.600H.3z" fill="#f3c84b"/><path d="M.3 3.900h17.400v10.400H.3z" fill="#fbe08a"/><path d="M3.300 8.200h11.400v6.100H3.300z" fill="#31a8ee"/><path d="M5.800 11h6.400v3.300H5.800z" fill="#fbe08a"/></svg>
<div style="left:155.600px;top:598.200px;width:31px;height:1.800px;background:#7fbdf0"></div>
<!-- store -->
<svg style="left:200.800px;top:574.800px" width="17" height="18.400" viewBox="0 0 17 18.400"><path d="M5.400 4.600c0-2.400 1.300-4 3.100-4s3.100 1.600 3.100 4" fill="none" stroke="#fff" stroke-width="1"/><path d="M.3 5.400l16.400-1.100v13.900L.3 16.800z" fill="#fff"/><path d="M4 8.100l3.700-.4v3.500H4zM8.600 7.600l4.400-.5v4.100H8.600zM4 12h3.700v3.500L4 15.100zM8.600 12H13v4l-4.400-.4z" fill="#06080d"/></svg>
<!-- active properties -->
<div style="left:229.200px;top:568.600px;width:37.200px;height:31.400px;background:#33363b"></div>
<div style="left:229.200px;top:598.200px;width:37.200px;height:1.800px;background:#86c1f2"></div>
<svg style="left:237.600px;top:578.600px" width="20" height="14.600" viewBox="0 0 34 25" preserveAspectRatio="none"><use href="#drive"/></svg>
<!-- tray -->
<svg style="left:638.800px;top:581.200px" width="10.400" height="6.200" viewBox="0 0 10.400 6.200"><path d="M.5 5.700L5.200.9l4.700 4.800" fill="none" stroke="#f2f2f2" stroke-width="1.100"/></svg>
<svg style="left:655.800px;top:578.800px" width="13.600" height="10.800" viewBox="0 0 13.600 10.800"><rect x="3.300" y="1.600" width="9.600" height="6.200" fill="none" stroke="#f2f2f2" stroke-width="1"/><path d="M8.100 7.800v2M5 10.200h6.200" stroke="#f2f2f2" stroke-width="1"/><rect x=".5" y=".5" width="3" height="4.400" fill="#06080d" stroke="#f2f2f2" stroke-width=".9"/><path d="M2 4.900v3.600h1.600" fill="none" stroke="#f2f2f2" stroke-width=".9"/></svg>
<svg style="left:675px;top:578.600px" width="13" height="11" viewBox="0 0 13 11"><path d="M.6 3.600h2.200L5.600.9v9.200L2.800 7.400H.6z" fill="none" stroke="#f2f2f2" stroke-width="1"/><path d="M7.300 3.700c.7.900.7 2.700 0 3.600M9.100 2.400c1.300 1.700 1.300 4.500 0 6.200M10.900 1.100c2 2.500 2 6.300 0 8.800" fill="none" stroke="#f2f2f2" stroke-width=".9"/></svg>
<svg style="left:693.800px;top:578.600px" width="12.600" height="11.800" viewBox="0 0 12.600 11.800"><path d="M.2.200h12.200v8.600H8.200L6.300 11.400 4.400 8.800H.2z" fill="#fff"/><path d="M2.400 2.700h7.800M2.400 4.500h7.800M2.400 6.300h5" stroke="#06080d" stroke-width=".9"/></svg>
<span class="t" style="left:714.6px;top:577.4px;font-size:9.4px;letter-spacing:-0.460px;color:#fff;">РУС</span>
<span class="t" style="left:757px;top:570.2px;font-size:8.7px;letter-spacing:-0.450px;color:#fff;">22:51</span>
<span class="t" style="left:745px;top:583.2px;font-size:8.7px;letter-spacing:-0.068px;color:#fff;">28.12.2015</span>
<div style="left:796.600px;top:568.600px;width:1px;height:31.400px;background:#4a4d52"></div>
</div>
<!-- ===== DESKTOP ICON ===== -->
<div id="dk" style="left:0;top:0;width:0;height:0;">
<svg style="left:14px;top:6px" width="34" height="36" viewBox="0 0 34 36"><defs><linearGradient id="rl" x1="0" y1="0" x2="0" y2="1"><stop offset="0" stop-color="#e4e8ec"/><stop offset="1" stop-color="#f1f3f5"/></linearGradient><linearGradient id="rr" x1="0" y1="0" x2="1" y2="1"><stop offset="0" stop-color="#d3d8de"/><stop offset="1" stop-color="#e3e6ea"/></linearGradient></defs><path d="M1.700 5.500L7 2.700l5.300-1.800 5.200 1 5.800-.4 4.200 2.500 4.300 3.600L18.600 11.400z" fill="#f2f3f5"/><path d="M6 5.200l3.600-2 3 1.400 3.400-1.800 3.800 1.600 3.400-1 3.200 2.400-3.400 1.800-4.200 1.600-5.600-.8z" fill="#d9dde2"/><path d="M12 3.600l3 2.200 4-1.600M20 6.600l3.600-1.400" stroke="#c2c8cf" stroke-width=".7" fill="none"/><path d="M1.700 5.500L18.600 11l-.4 23.200L5 30.500z" fill="url(#rl)"/><path d="M18.600 11L31.800 7.400l-3.300 23.800-10.300 3z" fill="url(#rr)"/><path d="M21 13.500l4 4.500-3 5 4.500 3M27 12l-2 7 3 4" stroke="#c3c9d0" stroke-width=".8" fill="none" opacity=".8"/><path d="M1.700 5.500L18.600 11 31.800 7.400" fill="none" stroke="#fbfcfd" stroke-width=".8" opacity=".9"/><g fill="#1b7fe8"><path d="M9.200 14.300l2.600-1.700 2.700 1 .9 2.900-2.400.9-.6-1.600-1.400.8z"/><path d="M6.200 17.600l2.300-1.700 1.600 1.300-1.100 2 1.400 1.200-1.500 2.100-2.800-1.900z"/><path d="M12.300 20.400l2.900-.8 1.400 2.300-1.300 2.700-3 .4-1.300-2 1.900-.6z"/></g></svg>
<span class="t" style="left:13px;top:45px;font-size:9.4px;letter-spacing:-0.103px;color:#fff;text-shadow:0 1px 2px rgba(0,0,0,.95),0 0 2px rgba(0,0,0,.8);">Корзина</span>
</div>
</body>
</html>
